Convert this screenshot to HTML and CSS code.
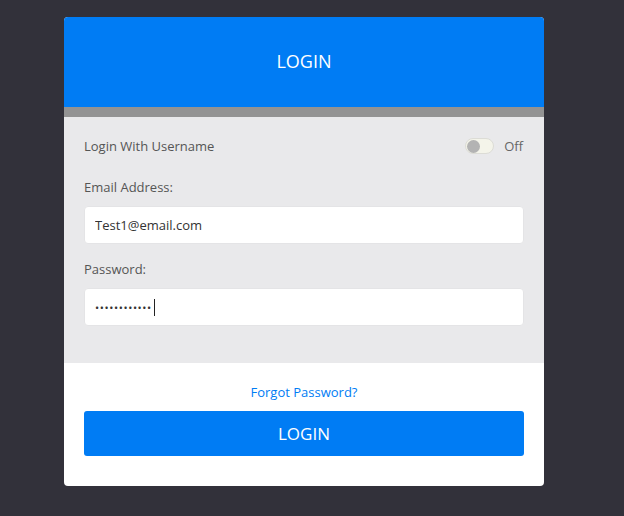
FILE: index.html
```html
<!DOCTYPE html>
<html lang="en">
<head>
  <meta charset="UTF-8" />
  <meta name="viewport" content="width=device-width, initial-scale=1.0"/>
  <title>Login</title>
  <link rel="stylesheet" href="styles.css">
</head>
<body>
  <div class="login-card">
    <div class="login-header">LOGIN</div>
    <div class="login-divider"></div>
    <form class="login-fields">
      <div class="toggle-row">
        <span>Login With Username</span>
        <label class="switch">
          <span class="switch-track"><span class="switch-knob"></span></span>
          <span class="switch-label">Off</span>
        </label>
      </div>
      <label class="field-label" for="email">Email Address:</label>
      <input type="email" id="email" value="Test1@email.com" />
      <label class="field-label" for="password">Password:</label>
      <div class="password-wrap">
        <input type="password" id="password" value="abcdefghijkl" />
        <span class="caret"></span>
      </div>
    </form>
    <div class="login-footer">
      <a href="#" class="forgot">Forgot Password?</a>
      <button type="button">LOGIN</button>
    </div>
  </div>
</body>
</html>
```

FILE: styles.css
```css
:root {
  --color-bg: #32313a;
  --color-blue: #007cf4;
  --color-panel: #e9e9eb;
  --color-label: #555;
}

body {
  margin: 0;
  padding: 17px 0 0 64px;
  font-family: 'Open Sans', sans-serif;
  background: var(--color-bg);
  height: 516px;
  box-sizing: border-box;
  overflow: hidden;
}

.login-card {
  width: 480px;
  background: #fff;
  border-radius: 4px;
  overflow: hidden;
}

.login-header {
  height: 90px;
  background: var(--color-blue);
  color: #fff;
  font-size: 18px;
  display: flex;
  align-items: center;
  justify-content: center;
  padding-bottom: 2px;
  box-sizing: border-box;
}

.login-divider {
  height: 10px;
  background: #939393;
}

.login-fields {
  background: var(--color-panel);
  padding: 20px 20px 37px;
  display: flex;
  flex-direction: column;
  margin: 0;
}

.toggle-row {
  display: flex;
  justify-content: space-between;
  align-items: center;
  height: 18px;
  font-size: 13px;
  color: var(--color-label);
  margin-bottom: 23px;
}

.switch {
  display: flex;
  align-items: center;
  gap: 10px;
}

.switch-track {
  width: 29px;
  height: 16px;
  box-sizing: border-box;
  border-radius: 8px;
  background: #f4f4ea;
  border: 1px solid #dcdcd6;
  display: flex;
  align-items: center;
  padding-left: 1px;
}

.switch-knob {
  width: 13px;
  height: 13px;
  border-radius: 50%;
  background: #b3b3b3;
}

.switch-label {
  color: #666;
  margin-right: 1px;
}

.field-label {
  font-size: 13px;
  line-height: 18px;
  color: var(--color-label);
  margin-bottom: 10px;
}

input {
  height: 38px;
  box-sizing: border-box;
  border: 1px solid #e4e4e6;
  border-radius: 4px;
  background: #fff;
  padding: 0 10px;
  font-family: 'Open Sans', sans-serif;
  font-size: 13px;
  color: #333;
  outline: none;
  width: 100%;
}

#email {
  margin-bottom: 16px;
}

.password-wrap {
  position: relative;
}

#password {
  font-size: 11px;
  letter-spacing: 0.6px;
}

.caret {
  position: absolute;
  left: 70px;
  top: 11px;
  width: 1px;
  height: 17px;
  background: #222;
}

.login-footer {
  padding: 20px 20px 30px;
  display: flex;
  flex-direction: column;
  align-items: center;
}

.forgot {
  font-size: 13px;
  line-height: 18px;
  color: var(--color-blue);
  text-decoration: none;
  margin-bottom: 10px;
}

button {
  width: 100%;
  height: 45px;
  border: none;
  border-radius: 3px;
  background: var(--color-blue);
  color: #fff;
  font-family: 'Open Sans', sans-serif;
  font-size: 17px;
  cursor: pointer;
}
```
